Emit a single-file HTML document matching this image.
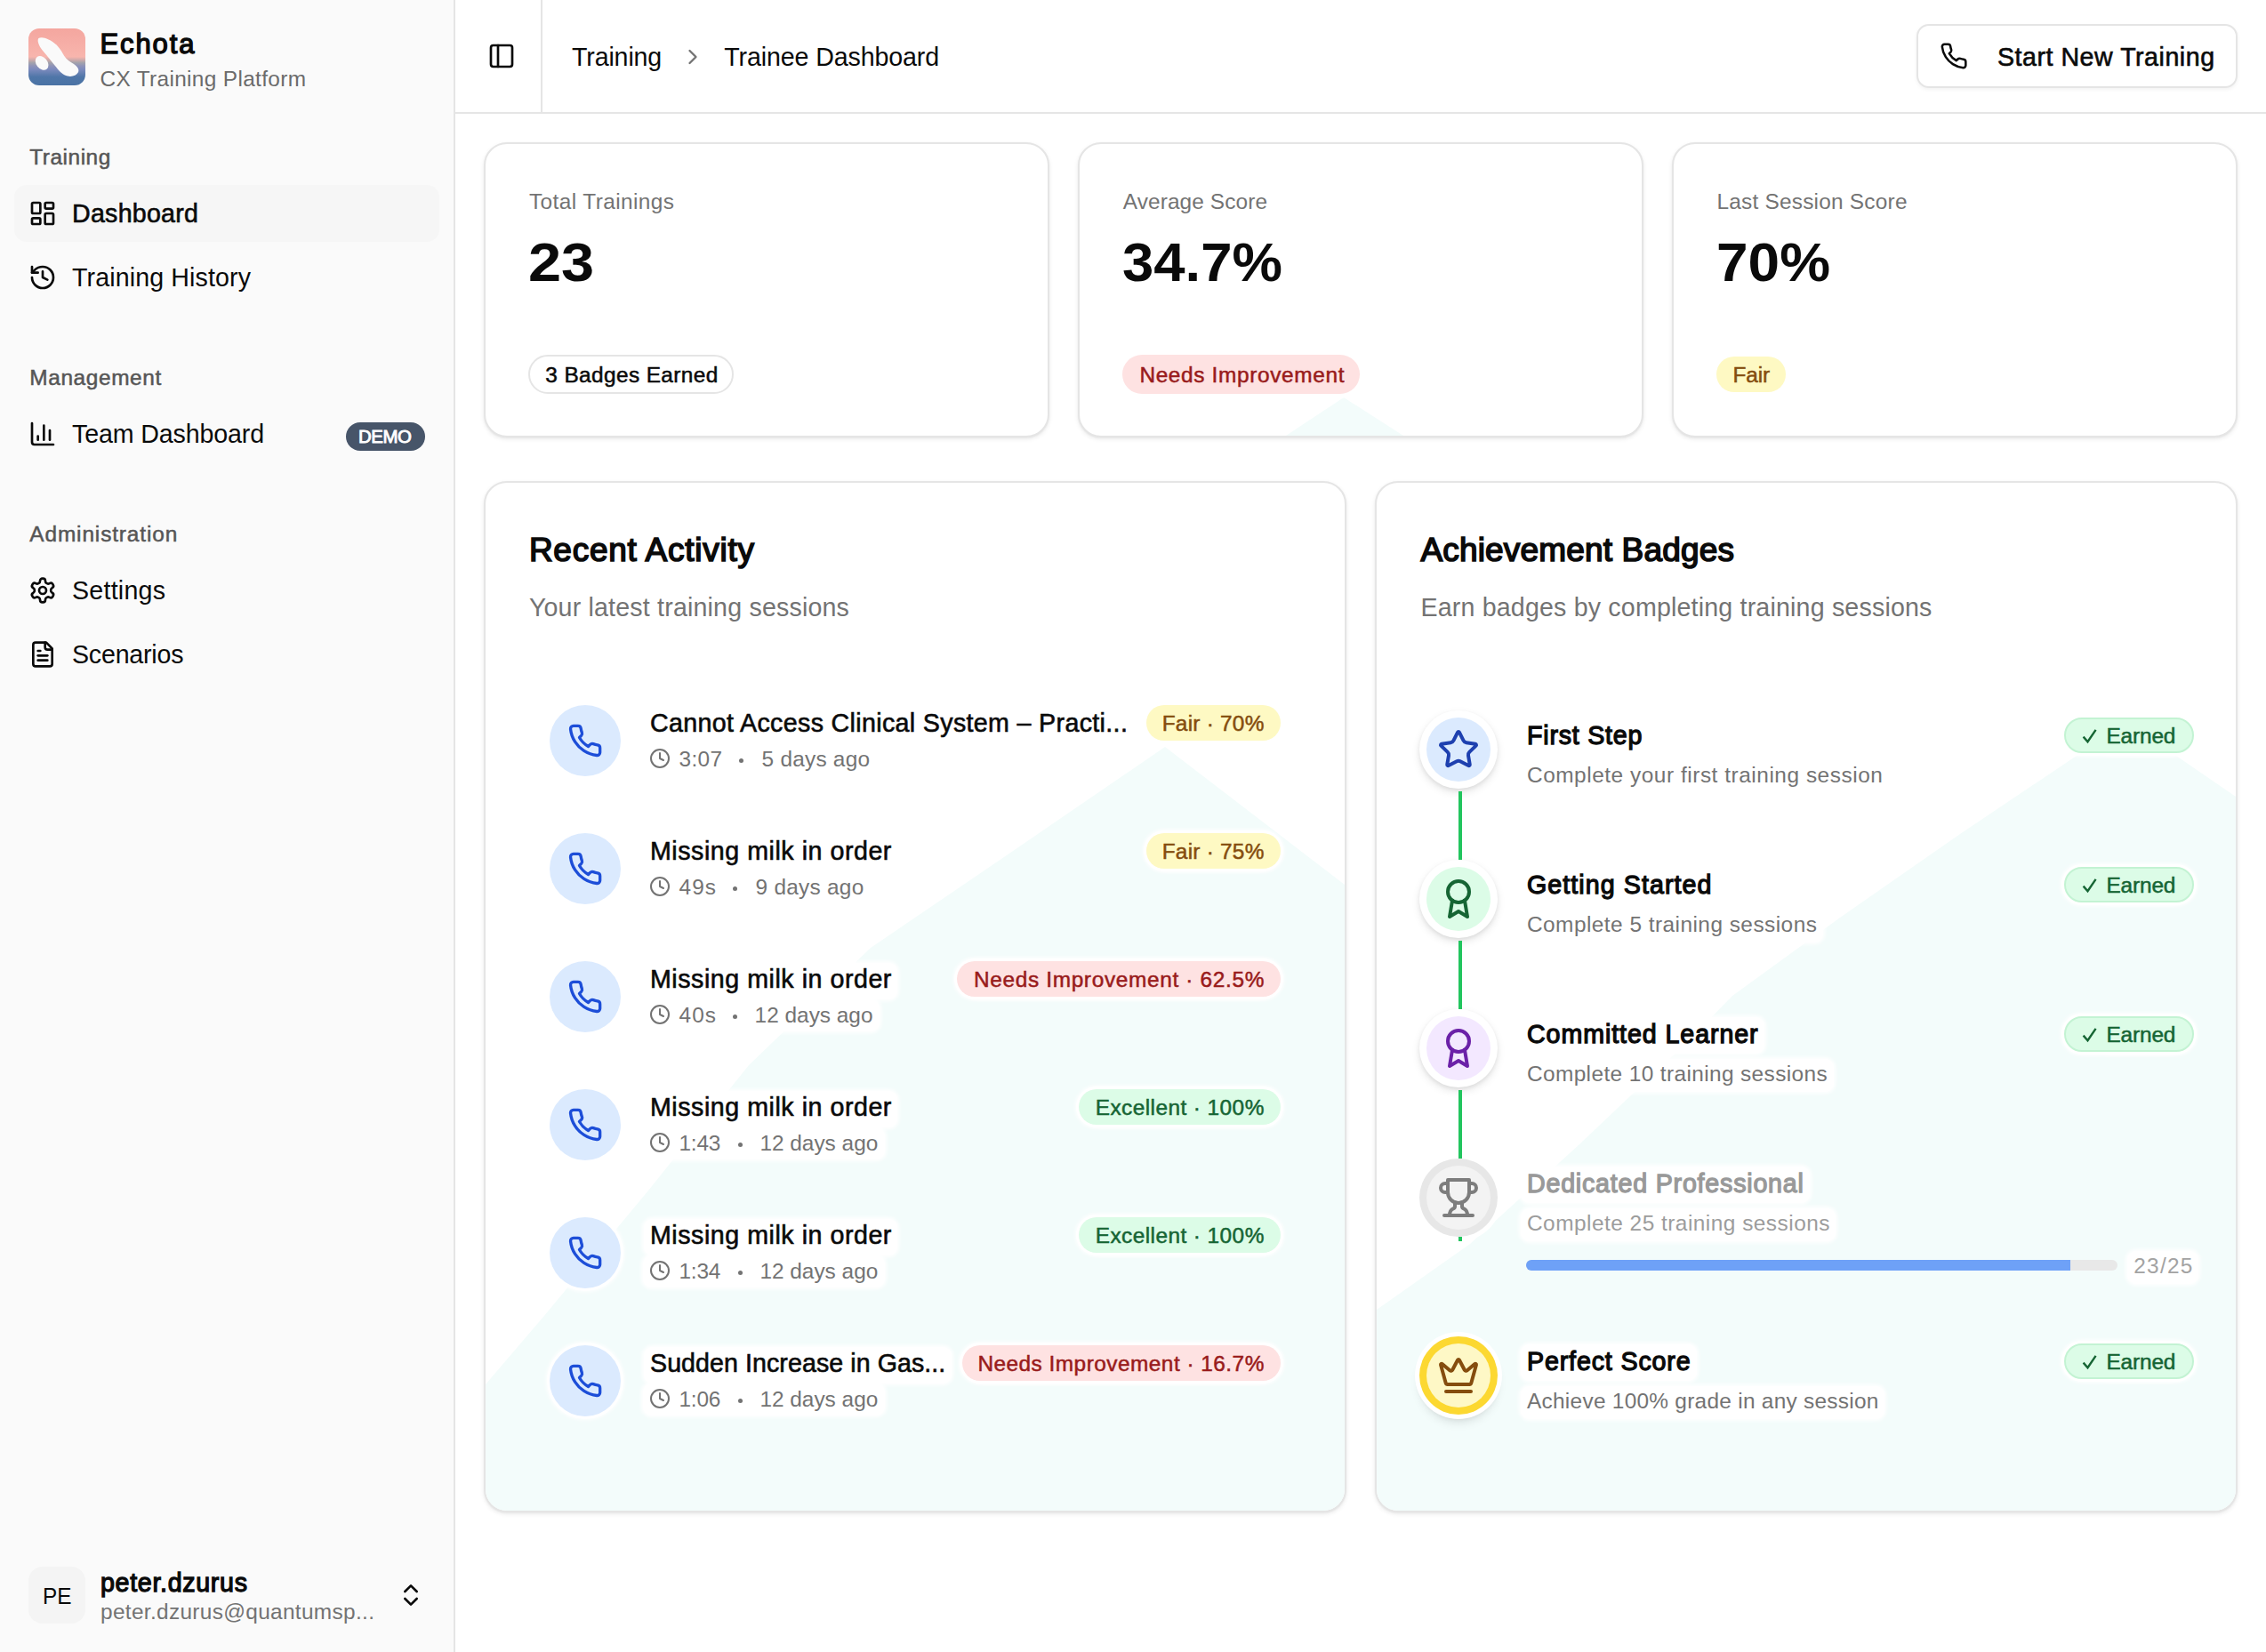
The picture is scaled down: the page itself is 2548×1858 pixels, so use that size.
<!DOCTYPE html>
<html lang="en">
<head>
<meta charset="utf-8">
<title>Echota – Trainee Dashboard</title>
<style>
*{box-sizing:border-box;margin:0;padding:0}
html,body{width:2548px;height:1858px;overflow:hidden;background:#fff}
body{font-family:"Liberation Sans",sans-serif;color:#0a0a0a;position:relative}
svg{display:block}
.ic{fill:none;stroke:currentColor;stroke-width:2;stroke-linecap:round;stroke-linejoin:round}
.abs{position:absolute}
.t{position:absolute;white-space:nowrap;line-height:1}
#sidebar{position:absolute;left:0;top:0;width:512px;height:1858px;background:#fafafa;border-right:2px solid #e5e5e5}
#active{position:absolute;left:16px;top:208px;width:478px;height:64px;border-radius:14px;background:#f6f6f6}
#demo{position:absolute;left:389px;top:475px;width:89px;height:32px;border-radius:16px;background:#475569}
#header{position:absolute;left:512px;top:0;width:2036px;height:128px;border-bottom:2px solid #e5e5e5;background:#fff}
#hsep{position:absolute;left:608px;top:0;width:2px;height:126px;background:#e5e5e5}
#startbtn{position:absolute;left:2155px;top:27px;width:361px;height:72px;border:2px solid #e5e5e5;border-radius:14px;background:#fff;box-shadow:0 2px 4px rgba(0,0,0,.05)}
.card{position:absolute;background:#fff;border:2px solid #e5e5e5;border-radius:26px;box-shadow:0 2px 5px rgba(0,0,0,.08),0 1px 2px rgba(0,0,0,.04);overflow:hidden}
.pill{position:absolute;border-radius:22px}
.p-out{border:2px solid #e5e5e5;background:#fff}
.p-red{background:#fee2e2}
.p-yel{background:#fef9c3}
.p-grn{background:#dcfce7}
.phone{position:absolute;width:80px;height:80px;border-radius:40px;background:#dbeafe;color:#1d4ed8}
.phone svg{position:absolute;left:20px;top:20px;width:40px;height:40px}
.earned{position:absolute;width:146px;height:40px;border-radius:20px;background:#dcfce7;border:2px solid #c3f3d3}
.bcirc{position:absolute;border-radius:50%}
.phone,.pill,.earned{box-shadow:0 0 0 3px #fff,0 0 4px 4px #fff}
.hb{position:absolute;background:#fff;border-radius:10px;box-shadow:0 0 4px 2px #fff}
</style>
</head>
<body>

<!-- ============ SIDEBAR ============ -->
<div id="sidebar"></div>
<svg class="abs" style="left:32px;top:32px" width="64" height="64" viewBox="0 0 64 64">
  <defs>
    <linearGradient id="lg" x1="0" y1="0" x2="0" y2="1">
      <stop offset="0" stop-color="#f4a69f"/>
      <stop offset="0.5" stop-color="#f8b5ad"/>
      <stop offset="0.555" stop-color="#cdaaab"/>
      <stop offset="0.6" stop-color="#a5a3ab"/>
      <stop offset="0.66" stop-color="#8e93b8"/>
      <stop offset="0.72" stop-color="#7c8abd"/>
      <stop offset="0.85" stop-color="#4f76a8"/>
      <stop offset="1" stop-color="#4a72a4"/>
    </linearGradient>
  </defs>
  <rect width="64" height="64" rx="12" fill="url(#lg)"/>
  <path d="M11.4 11 C15 8.6 24 11.5 31.6 18.5 C36 23 38.5 28 40.3 31 C42.5 34.5 46 37 50.6 39.7 C55.5 42.8 57.5 46.5 55.8 49.6 C54 53 49 54.6 44 53.6 C39 52.5 35 48.5 31.6 44.1 C27 38.2 20.7 30.5 15.2 23.9 C11.5 19 9.5 13.5 11.4 11 Z" fill="#fafafa"/>
  <ellipse cx="15.1" cy="38.9" rx="6.3" ry="8.8" transform="rotate(-38 15.1 38.9)" fill="#fafafa"/>
</svg>
<div class="t" style="left:112.5px;top:33.8px;font-size:31px;letter-spacing:1.90px;-webkit-text-stroke:1.36px">Echota</div>
<div class="t" style="left:112.5px;top:76.8px;font-size:24.4px;letter-spacing:0.34px;color:#6b6b6b">CX Training Platform</div>
<div class="t" style="left:33.3px;top:164.6px;font-size:24.4px;letter-spacing:0.54px;color:#565656;-webkit-text-stroke:0.51px">Training</div>
<div id="active"></div>
<svg class="abs ic" style="left:32px;top:224px;width:32px;height:32px" viewBox="0 0 24 24"><rect width="7" height="9" x="3" y="3" rx="1"/><rect width="7" height="5" x="14" y="3" rx="1"/><rect width="7" height="9" x="14" y="12" rx="1"/><rect width="7" height="5" x="3" y="16" rx="1"/></svg>
<div class="t" style="left:81.0px;top:226.1px;font-size:28.6px;letter-spacing:0.26px;-webkit-text-stroke:0.60px">Dashboard</div>
<svg class="abs ic" style="left:32px;top:296px;width:32px;height:32px" viewBox="0 0 24 24"><path d="M3 12a9 9 0 1 0 9-9 9.75 9.75 0 0 0-6.74 2.74L3 8"/><path d="M3 3v5h5"/><path d="M12 7v5l4 2"/></svg>
<div class="t" style="left:81.0px;top:298.1px;font-size:28.6px;letter-spacing:0.12px">Training History</div>
<div class="t" style="left:33.3px;top:412.7px;font-size:24.4px;letter-spacing:0.62px;color:#565656;-webkit-text-stroke:0.51px">Management</div>
<svg class="abs ic" style="left:32px;top:472px;width:32px;height:32px" viewBox="0 0 24 24"><path d="M3 3v16a2 2 0 0 0 2 2h16"/><path d="M18 17V9"/><path d="M13 17V5"/><path d="M8 17v-3"/></svg>
<div class="t" style="left:81.0px;top:474.0px;font-size:28.6px;letter-spacing:-0.13px">Team Dashboard</div>
<div id="demo"></div>
<div class="t" style="left:403.0px;top:481.0px;font-size:20.4px;letter-spacing:-0.40px;color:#fff;-webkit-text-stroke:0.90px">DEMO</div>
<div class="t" style="left:33.3px;top:589.0px;font-size:24.4px;letter-spacing:0.88px;color:#565656;-webkit-text-stroke:0.51px">Administration</div>
<svg class="abs ic" style="left:32px;top:648px;width:32px;height:32px" viewBox="0 0 24 24"><path d="M12.22 2h-.44a2 2 0 0 0-2 2v.18a2 2 0 0 1-1 1.73l-.43.25a2 2 0 0 1-2 0l-.15-.08a2 2 0 0 0-2.73.73l-.22.38a2 2 0 0 0 .73 2.73l.15.1a2 2 0 0 1 1 1.72v.51a2 2 0 0 1-1 1.74l-.15.09a2 2 0 0 0-.73 2.73l.22.38a2 2 0 0 0 2.73.73l.15-.08a2 2 0 0 1 2 0l.43.25a2 2 0 0 1 1 1.73V20a2 2 0 0 0 2 2h.44a2 2 0 0 0 2-2v-.18a2 2 0 0 1 1-1.73l.43-.25a2 2 0 0 1 2 0l.15.08a2 2 0 0 0 2.73-.73l.22-.39a2 2 0 0 0-.73-2.73l-.15-.08a2 2 0 0 1-1-1.74v-.5a2 2 0 0 1 1-1.74l.15-.09a2 2 0 0 0 .73-2.73l-.22-.38a2 2 0 0 0-2.73-.73l-.15.08a2 2 0 0 1-2 0l-.43-.25a2 2 0 0 1-1-1.73V4a2 2 0 0 0-2-2z"/><circle cx="12" cy="12" r="3"/></svg>
<div class="t" style="left:81.0px;top:649.5px;font-size:28.6px;letter-spacing:0.24px">Settings</div>
<svg class="abs ic" style="left:32px;top:720px;width:32px;height:32px" viewBox="0 0 24 24"><path d="M15 2H6a2 2 0 0 0-2 2v16a2 2 0 0 0 2 2h12a2 2 0 0 0 2-2V7Z"/><path d="M14 2v4a2 2 0 0 0 2 2h4"/><path d="M10 9H8"/><path d="M16 13H8"/><path d="M16 17H8"/></svg>
<div class="t" style="left:81.0px;top:721.7px;font-size:28.6px;letter-spacing:-0.21px">Scenarios</div>
<div class="abs" style="left:32px;top:1762px;width:64px;height:64px;border-radius:16px;background:#f4f4f4"></div>
<div class="t" style="left:48.0px;top:1782.3px;font-size:26.5px;transform:scaleX(0.9191);transform-origin:0 0">PE</div>
<div class="t" style="left:113.0px;top:1765.5px;font-size:28.6px;letter-spacing:0.69px;-webkit-text-stroke:1.26px">peter.dzurus</div>
<div class="t" style="left:113.0px;top:1801.0px;font-size:24.4px;letter-spacing:0.33px;color:#737373">peter.dzurus@quantumsp...</div>
<svg class="abs ic" style="left:446px;top:1778px;width:32px;height:32px" viewBox="0 0 24 24"><path d="m7 15 5 5 5-5"/><path d="m7 9 5-5 5 5"/></svg>

<!-- ============ HEADER ============ -->
<div id="header"></div>
<div id="hsep"></div>
<svg class="abs ic" style="left:548px;top:47px;width:32px;height:32px" viewBox="0 0 24 24"><rect width="18" height="18" x="3" y="3" rx="2"/><path d="M9 3v18"/></svg>
<div class="t" style="left:643.0px;top:49.5px;font-size:28.6px;letter-spacing:-0.14px">Training</div>
<svg class="abs ic" style="left:765px;top:49.5px;width:28px;height:28px;color:#737373" viewBox="0 0 24 24"><path d="m9 18 6-6-6-6"/></svg>
<div class="t" style="left:814.2px;top:49.5px;font-size:28.6px;letter-spacing:-0.11px">Trainee Dashboard</div>
<div id="startbtn"></div>
<svg class="abs ic" style="left:2181px;top:46.7px;width:32px;height:32px;stroke-width:1.9" viewBox="0 0 24 24"><path d="M22 16.92v3a2 2 0 0 1-2.18 2 19.79 19.79 0 0 1-8.63-3.07 19.5 19.5 0 0 1-6-6 19.79 19.79 0 0 1-3.07-8.67A2 2 0 0 1 4.11 2h3a2 2 0 0 1 2 1.72 12.84 12.84 0 0 0 .7 2.81 2 2 0 0 1-.45 2.11L8.09 9.91a16 16 0 0 0 6 6l1.27-1.27a2 2 0 0 1 2.11-.45 12.84 12.84 0 0 0 2.81.7A2 2 0 0 1 22 16.92z"/></svg>
<div class="t" style="left:2246.0px;top:49.9px;font-size:28.6px;letter-spacing:0.52px;-webkit-text-stroke:0.60px">Start New Training</div>

<!-- ============ STAT CARDS ============ -->
<div class="card" style="left:544px;top:160px;width:636px;height:332px"></div>
<div class="card" style="left:1212px;top:160px;width:636px;height:332px"><svg class="abs" style="left:0;top:0" width="632" height="328" viewBox="1214 162 632 328"><polygon fill="#f3fcfb" points="1511,447 1446,490 1578,490"/></svg></div>
<div class="card" style="left:1880px;top:160px;width:636px;height:332px"></div>
<div class="t" style="left:595.0px;top:215.0px;font-size:24.4px;letter-spacing:0.41px;color:#737373">Total Trainings</div>
<div class="t" style="left:594.2px;top:264.5px;font-size:60.5px;font-weight:700;transform:scaleX(1.1026);transform-origin:0 0">23</div>
<div class="pill p-out" style="left:594px;top:399px;width:231px;height:44px"></div>
<div class="t" style="left:613.3px;top:410.0px;font-size:24.4px;letter-spacing:0.39px;-webkit-text-stroke:0.51px">3 Badges Earned</div>
<div class="t" style="left:1262.7px;top:214.8px;font-size:24.4px;letter-spacing:0.12px;color:#737373">Average Score</div>
<div class="t" style="left:1262.2px;top:264.5px;font-size:60.5px;font-weight:700;transform:scaleX(1.0493);transform-origin:0 0">34.7%</div>
<div class="pill p-red" style="left:1262px;top:399px;width:267px;height:44px"></div>
<div class="t" style="left:1281.4px;top:410.0px;font-size:24.4px;letter-spacing:0.65px;color:#991b1b;-webkit-text-stroke:0.51px">Needs Improvement</div>
<div class="t" style="left:1930.4px;top:214.8px;font-size:24.4px;letter-spacing:0.23px;color:#737373">Last Session Score</div>
<div class="t" style="left:1930.2px;top:264.5px;font-size:60.5px;font-weight:700;transform:scaleX(1.0570);transform-origin:0 0">70%</div>
<div class="pill p-yel" style="left:1930px;top:401px;width:78px;height:40px"></div>
<div class="t" style="left:1948.5px;top:410.0px;font-size:24.4px;letter-spacing:-0.11px;color:#854d0e;-webkit-text-stroke:0.51px">Fair</div>

<!-- ============ RECENT ACTIVITY ============ -->
<div class="card" id="ra" style="left:544px;top:541px;width:970px;height:1160px"><svg class="abs" style="left:0;top:0" width="966" height="1156" viewBox="546 543 966 1156"><polygon fill="#f3fcfb" points="1310,840 1126,966 979,1066 842,1198 729,1339 611,1481 546,1557 546,1699 1512,1699 1512,995"/></svg>
</div>
<div class="card" id="ab" style="left:1546px;top:541px;width:970px;height:1160px"><svg class="abs" style="left:0;top:0" width="966" height="1156" viewBox="1548 543 966 1156"><polygon fill="#f3fcfb" points="2335,850 2447,850 2514,896 2514,1699 1548,1699 1548,1473 1653,1399 1776,1287 1895,1174 1948,1120 2069,1032 2204,938"/></svg>
</div>
<div class="hb" style="left:588px;top:596px;width:267px;height:50px"></div>
<div class="hb" style="left:588px;top:664px;width:374px;height:41px"></div>
<div class="hb" style="left:724px;top:795px;width:551px;height:41px"></div>
<div class="hb" style="left:723px;top:836px;width:263px;height:36px"></div>
<div class="hb" style="left:1300px;top:797px;width:129px;height:37px"></div>
<div class="hb" style="left:724px;top:939px;width:285px;height:41px"></div>
<div class="hb" style="left:723px;top:980px;width:256px;height:36px"></div>
<div class="hb" style="left:1300px;top:941px;width:129px;height:37px"></div>
<div class="hb" style="left:724px;top:1083px;width:285px;height:41px"></div>
<div class="hb" style="left:723px;top:1124px;width:266px;height:36px"></div>
<div class="hb" style="left:1088px;top:1085px;width:340px;height:37px"></div>
<div class="hb" style="left:724px;top:1227px;width:285px;height:41px"></div>
<div class="hb" style="left:723px;top:1268px;width:272px;height:36px"></div>
<div class="hb" style="left:1225px;top:1229px;width:204px;height:37px"></div>
<div class="hb" style="left:724px;top:1371px;width:285px;height:41px"></div>
<div class="hb" style="left:723px;top:1412px;width:272px;height:36px"></div>
<div class="hb" style="left:1225px;top:1373px;width:204px;height:37px"></div>
<div class="hb" style="left:724px;top:1515px;width:346px;height:41px"></div>
<div class="hb" style="left:723px;top:1556px;width:272px;height:36px"></div>
<div class="hb" style="left:1092px;top:1517px;width:336px;height:37px"></div>
<div class="hb" style="left:1590px;top:597px;width:367px;height:50px"></div>
<div class="hb" style="left:1590px;top:664px;width:589px;height:41px"></div>
<div class="hb" style="left:1710px;top:808px;width:143px;height:41px"></div>
<div class="hb" style="left:1710px;top:855px;width:414px;height:37px"></div>
<div class="hb" style="left:2361px;top:811px;width:92px;height:37px"></div>
<div class="hb" style="left:1710px;top:976px;width:222px;height:41px"></div>
<div class="hb" style="left:1710px;top:1023px;width:340px;height:37px"></div>
<div class="hb" style="left:2361px;top:979px;width:92px;height:37px"></div>
<div class="hb" style="left:1710px;top:1144px;width:274px;height:41px"></div>
<div class="hb" style="left:1710px;top:1191px;width:352px;height:37px"></div>
<div class="hb" style="left:2361px;top:1147px;width:92px;height:37px"></div>
<div class="hb" style="left:1710px;top:1312px;width:325px;height:41px"></div>
<div class="hb" style="left:1710px;top:1359px;width:354px;height:37px"></div>
<div class="hb" style="left:1710px;top:1512px;width:198px;height:41px"></div>
<div class="hb" style="left:1710px;top:1559px;width:409px;height:37px"></div>
<div class="hb" style="left:2361px;top:1515px;width:92px;height:37px"></div>
<div class="hb" style="left:2392px;top:1407px;width:80px;height:37px"></div>
<div class="t" style="left:594.9px;top:599.7px;font-size:37px;letter-spacing:0.74px;-webkit-text-stroke:1.63px">Recent Activity</div>
<div class="t" style="left:594.9px;top:668.5px;font-size:28.6px;letter-spacing:0.18px;color:#737373">Your latest training sessions</div>
<div class="phone" style="left:618px;top:793px"><svg class="ic" viewBox="0 0 24 24"><path d="M22 16.92v3a2 2 0 0 1-2.18 2 19.79 19.79 0 0 1-8.63-3.07 19.5 19.5 0 0 1-6-6 19.79 19.79 0 0 1-3.07-8.67A2 2 0 0 1 4.11 2h3a2 2 0 0 1 2 1.72 12.84 12.84 0 0 0 .7 2.81 2 2 0 0 1-.45 2.11L8.09 9.91a16 16 0 0 0 6 6l1.27-1.27a2 2 0 0 1 2.11-.45 12.84 12.84 0 0 0 2.81.7A2 2 0 0 1 22 16.92z"/></svg></div>
<div class="t" style="left:731.0px;top:799.3px;font-size:28.6px;letter-spacing:0.35px;-webkit-text-stroke:0.60px">Cannot Access Clinical System – Practi...</div>
<svg class="abs ic" style="left:730px;top:841px;width:24px;height:24px;color:#737373" viewBox="0 0 24 24"><circle cx="12" cy="12" r="10"/><polyline points="12 6 12 12 16 14"/></svg>
<div class="t" style="left:763.5px;top:841.8px;font-size:24.4px;letter-spacing:0.37px;color:#737373">3:07</div>
<div class="abs" style="left:831.1px;top:852.5px;width:5px;height:5px;border-radius:3px;background:#737373"></div>
<div class="t" style="left:856.6px;top:841.8px;font-size:24.4px;letter-spacing:0.23px;color:#737373">5 days ago</div>
<div class="pill p-yel" style="left:1289px;top:793px;width:151px;height:40px"></div>
<div class="t" style="left:1306.7px;top:801.6px;font-size:24.4px;letter-spacing:0.24px;color:#854d0e;-webkit-text-stroke:0.51px">Fair · 70%</div>
<div class="phone" style="left:618px;top:937px"><svg class="ic" viewBox="0 0 24 24"><path d="M22 16.92v3a2 2 0 0 1-2.18 2 19.79 19.79 0 0 1-8.63-3.07 19.5 19.5 0 0 1-6-6 19.79 19.79 0 0 1-3.07-8.67A2 2 0 0 1 4.11 2h3a2 2 0 0 1 2 1.72 12.84 12.84 0 0 0 .7 2.81 2 2 0 0 1-.45 2.11L8.09 9.91a16 16 0 0 0 6 6l1.27-1.27a2 2 0 0 1 2.11-.45 12.84 12.84 0 0 0 2.81.7A2 2 0 0 1 22 16.92z"/></svg></div>
<div class="t" style="left:731.0px;top:943.3px;font-size:28.6px;letter-spacing:0.54px;-webkit-text-stroke:0.60px">Missing milk in order</div>
<svg class="abs ic" style="left:730px;top:985px;width:24px;height:24px;color:#737373" viewBox="0 0 24 24"><circle cx="12" cy="12" r="10"/><polyline points="12 6 12 12 16 14"/></svg>
<div class="t" style="left:763.5px;top:985.8px;font-size:24.4px;letter-spacing:1.09px;color:#737373">49s</div>
<div class="abs" style="left:824.1px;top:996.5px;width:5px;height:5px;border-radius:3px;background:#737373"></div>
<div class="t" style="left:849.5px;top:985.8px;font-size:24.4px;letter-spacing:0.27px;color:#737373">9 days ago</div>
<div class="pill p-yel" style="left:1289px;top:937px;width:151px;height:40px"></div>
<div class="t" style="left:1306.7px;top:945.6px;font-size:24.4px;letter-spacing:0.24px;color:#854d0e;-webkit-text-stroke:0.51px">Fair · 75%</div>
<div class="phone" style="left:618px;top:1081px"><svg class="ic" viewBox="0 0 24 24"><path d="M22 16.92v3a2 2 0 0 1-2.18 2 19.79 19.79 0 0 1-8.63-3.07 19.5 19.5 0 0 1-6-6 19.79 19.79 0 0 1-3.07-8.67A2 2 0 0 1 4.11 2h3a2 2 0 0 1 2 1.72 12.84 12.84 0 0 0 .7 2.81 2 2 0 0 1-.45 2.11L8.09 9.91a16 16 0 0 0 6 6l1.27-1.27a2 2 0 0 1 2.11-.45 12.84 12.84 0 0 0 2.81.7A2 2 0 0 1 22 16.92z"/></svg></div>
<div class="t" style="left:731.0px;top:1087.3px;font-size:28.6px;letter-spacing:0.54px;-webkit-text-stroke:0.60px">Missing milk in order</div>
<svg class="abs ic" style="left:730px;top:1129px;width:24px;height:24px;color:#737373" viewBox="0 0 24 24"><circle cx="12" cy="12" r="10"/><polyline points="12 6 12 12 16 14"/></svg>
<div class="t" style="left:763.5px;top:1129.8px;font-size:24.4px;letter-spacing:1.09px;color:#737373">40s</div>
<div class="abs" style="left:824.1px;top:1140.5px;width:5px;height:5px;border-radius:3px;background:#737373"></div>
<div class="t" style="left:848.6px;top:1129.8px;font-size:24.4px;letter-spacing:-0.00px;color:#737373">12 days ago</div>
<div class="pill p-red" style="left:1076px;top:1081px;width:364px;height:40px"></div>
<div class="t" style="left:1094.9px;top:1089.6px;font-size:24.4px;letter-spacing:0.67px;color:#991b1b;-webkit-text-stroke:0.51px">Needs Improvement · 62.5%</div>
<div class="phone" style="left:618px;top:1225px"><svg class="ic" viewBox="0 0 24 24"><path d="M22 16.92v3a2 2 0 0 1-2.18 2 19.79 19.79 0 0 1-8.63-3.07 19.5 19.5 0 0 1-6-6 19.79 19.79 0 0 1-3.07-8.67A2 2 0 0 1 4.11 2h3a2 2 0 0 1 2 1.72 12.84 12.84 0 0 0 .7 2.81 2 2 0 0 1-.45 2.11L8.09 9.91a16 16 0 0 0 6 6l1.27-1.27a2 2 0 0 1 2.11-.45 12.84 12.84 0 0 0 2.81.7A2 2 0 0 1 22 16.92z"/></svg></div>
<div class="t" style="left:731.0px;top:1231.3px;font-size:28.6px;letter-spacing:0.54px;-webkit-text-stroke:0.60px">Missing milk in order</div>
<svg class="abs ic" style="left:730px;top:1273px;width:24px;height:24px;color:#737373" viewBox="0 0 24 24"><circle cx="12" cy="12" r="10"/><polyline points="12 6 12 12 16 14"/></svg>
<div class="t" style="left:763.5px;top:1273.8px;font-size:24.4px;letter-spacing:-0.23px;color:#737373">1:43</div>
<div class="abs" style="left:829.8px;top:1284.5px;width:5px;height:5px;border-radius:3px;background:#737373"></div>
<div class="t" style="left:854.4px;top:1273.8px;font-size:24.4px;letter-spacing:-0.00px;color:#737373">12 days ago</div>
<div class="pill p-grn" style="left:1213px;top:1225px;width:227px;height:40px"></div>
<div class="t" style="left:1231.7px;top:1233.6px;font-size:24.4px;letter-spacing:0.44px;color:#166534;-webkit-text-stroke:0.51px">Excellent · 100%</div>
<div class="phone" style="left:618px;top:1369px"><svg class="ic" viewBox="0 0 24 24"><path d="M22 16.92v3a2 2 0 0 1-2.18 2 19.79 19.79 0 0 1-8.63-3.07 19.5 19.5 0 0 1-6-6 19.79 19.79 0 0 1-3.07-8.67A2 2 0 0 1 4.11 2h3a2 2 0 0 1 2 1.72 12.84 12.84 0 0 0 .7 2.81 2 2 0 0 1-.45 2.11L8.09 9.91a16 16 0 0 0 6 6l1.27-1.27a2 2 0 0 1 2.11-.45 12.84 12.84 0 0 0 2.81.7A2 2 0 0 1 22 16.92z"/></svg></div>
<div class="t" style="left:731.0px;top:1375.3px;font-size:28.6px;letter-spacing:0.54px;-webkit-text-stroke:0.60px">Missing milk in order</div>
<svg class="abs ic" style="left:730px;top:1417px;width:24px;height:24px;color:#737373" viewBox="0 0 24 24"><circle cx="12" cy="12" r="10"/><polyline points="12 6 12 12 16 14"/></svg>
<div class="t" style="left:763.5px;top:1417.8px;font-size:24.4px;letter-spacing:-0.23px;color:#737373">1:34</div>
<div class="abs" style="left:829.8px;top:1428.5px;width:5px;height:5px;border-radius:3px;background:#737373"></div>
<div class="t" style="left:854.4px;top:1417.8px;font-size:24.4px;letter-spacing:-0.00px;color:#737373">12 days ago</div>
<div class="pill p-grn" style="left:1213px;top:1369px;width:227px;height:40px"></div>
<div class="t" style="left:1231.7px;top:1377.6px;font-size:24.4px;letter-spacing:0.44px;color:#166534;-webkit-text-stroke:0.51px">Excellent · 100%</div>
<div class="phone" style="left:618px;top:1513px"><svg class="ic" viewBox="0 0 24 24"><path d="M22 16.92v3a2 2 0 0 1-2.18 2 19.79 19.79 0 0 1-8.63-3.07 19.5 19.5 0 0 1-6-6 19.79 19.79 0 0 1-3.07-8.67A2 2 0 0 1 4.11 2h3a2 2 0 0 1 2 1.72 12.84 12.84 0 0 0 .7 2.81 2 2 0 0 1-.45 2.11L8.09 9.91a16 16 0 0 0 6 6l1.27-1.27a2 2 0 0 1 2.11-.45 12.84 12.84 0 0 0 2.81.7A2 2 0 0 1 22 16.92z"/></svg></div>
<div class="t" style="left:731.0px;top:1519.3px;font-size:28.6px;letter-spacing:0.07px;-webkit-text-stroke:0.60px">Sudden Increase in Gas...</div>
<svg class="abs ic" style="left:730px;top:1561px;width:24px;height:24px;color:#737373" viewBox="0 0 24 24"><circle cx="12" cy="12" r="10"/><polyline points="12 6 12 12 16 14"/></svg>
<div class="t" style="left:763.5px;top:1561.8px;font-size:24.4px;letter-spacing:-0.23px;color:#737373">1:06</div>
<div class="abs" style="left:829.8px;top:1572.5px;width:5px;height:5px;border-radius:3px;background:#737373"></div>
<div class="t" style="left:854.4px;top:1561.8px;font-size:24.4px;letter-spacing:-0.00px;color:#737373">12 days ago</div>
<div class="pill p-red" style="left:1082px;top:1513px;width:358px;height:40px"></div>
<div class="t" style="left:1099.4px;top:1521.6px;font-size:24.4px;letter-spacing:0.48px;color:#991b1b;-webkit-text-stroke:0.51px">Needs Improvement · 16.7%</div>

<!-- ============ ACHIEVEMENT BADGES ============ -->
<div class="t" style="left:1597.4px;top:600.4px;font-size:37px;letter-spacing:0.17px;-webkit-text-stroke:1.63px">Achievement Badges</div>
<div class="t" style="left:1597.4px;top:668.5px;font-size:28.6px;letter-spacing:0.18px;color:#737373">Earn badges by completing training sessions</div>
<div class="bcirc" style="left:1596px;top:799px;width:88px;height:88px;background:#fff;box-shadow:0 4px 10px rgba(0,0,0,.10),0 2px 4px rgba(0,0,0,.06);"></div>
<div class="bcirc" style="left:1604px;top:807px;width:72px;height:72px;background:#dbeafe"></div>
<svg class="abs ic" style="left:1616px;top:819px;width:48px;height:48px;color:#1e40af" viewBox="0 0 24 24"><path d="M11.525 2.295a.53.53 0 0 1 .95 0l2.31 4.679a2.123 2.123 0 0 0 1.595 1.16l5.166.756a.53.53 0 0 1 .294.904l-3.736 3.638a2.123 2.123 0 0 0-.611 1.878l.882 5.14a.53.53 0 0 1-.771.56l-4.618-2.428a2.122 2.122 0 0 0-1.973 0L6.396 21.01a.53.53 0 0 1-.77-.56l.881-5.139a2.122 2.122 0 0 0-.611-1.879L2.16 9.795a.53.53 0 0 1 .294-.906l5.165-.755a2.122 2.122 0 0 0 1.597-1.16z"/></svg>
<div class="t" style="left:1717.0px;top:812.7px;font-size:28.6px;letter-spacing:0.78px;-webkit-text-stroke:1.26px">First Step</div>
<div class="t" style="left:1717.0px;top:859.8px;font-size:24.4px;letter-spacing:0.54px;color:#737373">Complete your first training session</div>
<div class="earned" style="left:2321px;top:807px"></div>
<svg class="abs ic" style="left:2321px;top:807px;width:60px;height:40px;color:#166534;stroke-width:2.4;stroke-linecap:butt;stroke-linejoin:miter" viewBox="0 0 60 40"><path d="M21.6 21.6 L26.5 27.2 L35.6 13.8"/></svg>
<div class="t" style="left:2368.4px;top:815.6px;font-size:24.4px;letter-spacing:-0.13px;color:#166534;-webkit-text-stroke:0.51px">Earned</div>
<div class="bcirc" style="left:1596px;top:967px;width:88px;height:88px;background:#fff;box-shadow:0 4px 10px rgba(0,0,0,.10),0 2px 4px rgba(0,0,0,.06);"></div>
<div class="bcirc" style="left:1604px;top:975px;width:72px;height:72px;background:#dcfce7"></div>
<svg class="abs ic" style="left:1616px;top:987px;width:48px;height:48px;color:#166534" viewBox="0 0 24 24"><circle cx="12" cy="8" r="6"/><path d="M15.477 12.89 17 22l-5-3-5 3 1.523-9.11"/></svg>
<div class="t" style="left:1717.0px;top:980.7px;font-size:28.6px;letter-spacing:1.08px;-webkit-text-stroke:1.26px">Getting Started</div>
<div class="t" style="left:1717.0px;top:1027.8px;font-size:24.4px;letter-spacing:0.47px;color:#737373">Complete 5 training sessions</div>
<div class="earned" style="left:2321px;top:975px"></div>
<svg class="abs ic" style="left:2321px;top:975px;width:60px;height:40px;color:#166534;stroke-width:2.4;stroke-linecap:butt;stroke-linejoin:miter" viewBox="0 0 60 40"><path d="M21.6 21.6 L26.5 27.2 L35.6 13.8"/></svg>
<div class="t" style="left:2368.4px;top:983.6px;font-size:24.4px;letter-spacing:-0.13px;color:#166534;-webkit-text-stroke:0.51px">Earned</div>
<div class="bcirc" style="left:1596px;top:1135px;width:88px;height:88px;background:#fff;box-shadow:0 4px 10px rgba(0,0,0,.10),0 2px 4px rgba(0,0,0,.06);"></div>
<div class="bcirc" style="left:1604px;top:1143px;width:72px;height:72px;background:#f3e8ff"></div>
<svg class="abs ic" style="left:1616px;top:1155px;width:48px;height:48px;color:#6b21a8" viewBox="0 0 24 24"><circle cx="12" cy="8" r="6"/><path d="M15.477 12.89 17 22l-5-3-5 3 1.523-9.11"/></svg>
<div class="t" style="left:1717.0px;top:1148.7px;font-size:28.6px;letter-spacing:0.93px;-webkit-text-stroke:1.26px">Committed Learner</div>
<div class="t" style="left:1717.0px;top:1195.8px;font-size:24.4px;letter-spacing:0.39px;color:#737373">Complete 10 training sessions</div>
<div class="earned" style="left:2321px;top:1143px"></div>
<svg class="abs ic" style="left:2321px;top:1143px;width:60px;height:40px;color:#166534;stroke-width:2.4;stroke-linecap:butt;stroke-linejoin:miter" viewBox="0 0 60 40"><path d="M21.6 21.6 L26.5 27.2 L35.6 13.8"/></svg>
<div class="t" style="left:2368.4px;top:1151.6px;font-size:24.4px;letter-spacing:-0.13px;color:#166534;-webkit-text-stroke:0.51px">Earned</div>
<div class="bcirc" style="left:1596px;top:1303px;width:88px;height:88px;background:#e7e7e7;box-shadow:0 0 0 5px #fff;"></div>
<div class="bcirc" style="left:1604px;top:1311px;width:72px;height:72px;background:#f3f3f3"></div>
<svg class="abs ic" style="left:1616px;top:1323px;width:48px;height:48px;color:#7d7d7d" viewBox="0 0 24 24"><path d="M6 9H4.5a2.5 2.5 0 0 1 0-5H6"/><path d="M18 9h1.5a2.5 2.5 0 0 0 0-5H18"/><path d="M4 22h16"/><path d="M10 14.66V17c0 .55-.47.98-.97 1.21C7.85 18.75 7 20.24 7 22"/><path d="M14 14.66V17c0 .55.47.98.97 1.21C16.15 18.75 17 20.24 17 22"/><path d="M18 2H6v7a6 6 0 0 0 12 0V2Z"/></svg>
<div class="t" style="left:1717.0px;top:1316.7px;font-size:28.6px;letter-spacing:0.80px;color:#999999;-webkit-text-stroke:1.26px">Dedicated Professional</div>
<div class="t" style="left:1717.0px;top:1363.8px;font-size:24.4px;letter-spacing:0.49px;color:#9c9c9c">Complete 25 training sessions</div>
<div class="bcirc" style="left:1596px;top:1503px;width:88px;height:88px;background:#fcd831;box-shadow:0 0 0 5px #fff,0 9px 12px -1px rgba(0,0,0,.13),0 4px 6px rgba(0,0,0,.07);"></div>
<div class="bcirc" style="left:1604px;top:1511px;width:72px;height:72px;background:#fef8c6"></div>
<svg class="abs ic" style="left:1616px;top:1523px;width:48px;height:48px;color:#854d0e" viewBox="0 0 24 24"><path d="M11.562 3.266a.5.5 0 0 1 .876 0L15.39 8.87a1 1 0 0 0 1.516.294L21.183 5.5a.5.5 0 0 1 .798.519l-2.834 10.246a1 1 0 0 1-.956.734H5.81a1 1 0 0 1-.957-.734L2.02 6.02a.5.5 0 0 1 .798-.519l4.276 3.664a1 1 0 0 0 1.516-.294z"/><path d="M5 21h14"/></svg>
<div class="t" style="left:1717.0px;top:1516.7px;font-size:28.6px;letter-spacing:0.87px;-webkit-text-stroke:1.26px">Perfect Score</div>
<div class="t" style="left:1717.0px;top:1563.8px;font-size:24.4px;letter-spacing:0.28px;color:#737373">Achieve 100% grade in any session</div>
<div class="earned" style="left:2321px;top:1511px"></div>
<svg class="abs ic" style="left:2321px;top:1511px;width:60px;height:40px;color:#166534;stroke-width:2.4;stroke-linecap:butt;stroke-linejoin:miter" viewBox="0 0 60 40"><path d="M21.6 21.6 L26.5 27.2 L35.6 13.8"/></svg>
<div class="t" style="left:2368.4px;top:1519.6px;font-size:24.4px;letter-spacing:-0.13px;color:#166534;-webkit-text-stroke:0.51px">Earned</div>
<div class="abs" style="left:1640px;top:890px;width:4px;height:77px;background:#22c55e"></div>
<div class="abs" style="left:1640px;top:1058px;width:4px;height:77px;background:#22c55e"></div>
<div class="abs" style="left:1640px;top:1226px;width:4px;height:77px;background:#22c55e"></div>
<div class="abs" style="left:1640px;top:1391px;width:4px;height:5px;background:#22c55e"></div>
<div class="abs" style="left:1716px;top:1417px;width:665px;height:12px;border-radius:6px;background:#e8e8e8;overflow:hidden"><div style="width:612px;height:12px;background:#6ea1f7"></div></div>
<div class="t" style="left:2399.3px;top:1412.4px;font-size:24.4px;letter-spacing:1.24px;color:#a3a3a3">23/25</div>

</body>
</html>
